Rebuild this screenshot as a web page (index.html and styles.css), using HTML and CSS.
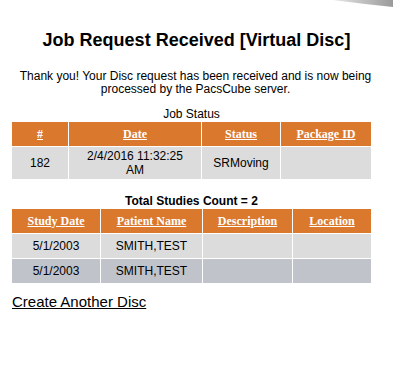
FILE: index.html
```html
<!DOCTYPE html>
<html lang="en">
  <head>
    <meta charset="UTF-8" />
    <meta name="viewport" content="width=device-width, initial-scale=1.0" />
    <title>Job Request Received</title>
    <link rel="stylesheet" href="styles.css">
  </head>
  <body>
    <!-- corner of the page curl -->
    <svg class="curl" width="60" height="8" viewBox="0 0 60 8">
      <defs>
        <linearGradient id="curlGrad" x1="0" y1="0" x2="1" y2="0">
          <stop offset="0" stop-color="#e6e6e6" />
          <stop offset="1" stop-color="#9a9a9a" />
        </linearGradient>
      </defs>
      <path d="M0 0 L60 0 L60 7 Q30 4 0 0 Z" fill="url(#curlGrad)" />
    </svg>

    <h1 class="title">Job Request Received [Virtual Disc]</h1>

    <p class="message">Thank you! Your Disc request has been received and is now being processed by the PacsCube server.</p>

    <table class="grid job">
      <caption>Job Status</caption>
      <thead>
        <tr>
          <th class="c-no"><a href="#">#</a></th>
          <th class="c-date"><a href="#">Date</a></th>
          <th class="c-status"><a href="#">Status</a></th>
          <th class="c-pkg"><a href="#">Package ID</a></th>
        </tr>
      </thead>
      <tbody>
        <tr class="tall">
          <td>182</td>
          <td>2/4/2016 11:32:25 AM</td>
          <td>SRMoving</td>
          <td></td>
        </tr>
      </tbody>
    </table>

    <table class="grid studies">
      <caption class="count">Total Studies Count = 2</caption>
      <thead>
        <tr>
          <th class="c-sdate"><a href="#">Study Date</a></th>
          <th class="c-name"><a href="#">Patient Name</a></th>
          <th class="c-desc"><a href="#">Description</a></th>
          <th class="c-loc"><a href="#">Location</a></th>
        </tr>
      </thead>
      <tbody>
        <tr>
          <td>5/1/2003</td>
          <td>SMITH,TEST</td>
          <td></td>
          <td></td>
        </tr>
        <tr class="alt">
          <td>5/1/2003</td>
          <td>SMITH,TEST</td>
          <td></td>
          <td></td>
        </tr>
      </tbody>
    </table>

    <a class="again" href="#">Create Another Disc</a>
  </body>
</html>
```

FILE: styles.css
```css
body {
    margin: 0;
    font-family: "Liberation Sans", Arial, sans-serif;
    font-size: 12px;
    color: #000;
    background: #fff;
}

.curl {
    position: absolute;
    top: 0;
    right: 0;
}

.title {
    margin: 29px 0 0;
    font-size: 18px;
    line-height: 22px;
    text-align: center;
}

.message {
    margin: 19px 0 0;
    padding: 0 14px 0 12px;
    line-height: 13px;
    text-align: center;
}

.grid {
    width: 361px;
    margin-left: 11px;
    border-collapse: separate;
    border-spacing: 1px;
    table-layout: fixed;
}

.grid caption {
    line-height: 14px;
    padding-bottom: 0;
}

.grid caption.count {
    font-weight: bold;
}

.job {
    margin-top: 11px;
}

.studies {
    margin-top: 14px;
}

.grid th,
.grid td {
    box-sizing: border-box;
}

.grid th {
    height: 24px;
    padding: 0 2px;
    background-color: #da792e;
    font-family: "Liberation Serif", "Times New Roman", serif;
    font-size: 12px;
    font-weight: bold;
    text-align: center;
}

.grid th a {
    color: #fff;
}

.grid td {
    height: 24px;
    padding: 0 10px;
    background-color: #dcdcdc;
    text-align: center;
    line-height: 14px;
}

.grid tr.tall td {
    height: 32px;
}

.grid tr.alt td {
    background-color: #c0c3ca;
}

.c-no { width: 56px; }
.c-date { width: 132px; }
.c-status { width: 78px; }
.c-pkg { width: 90px; }

.c-sdate { width: 88px; }
.c-name { width: 101px; }
.c-desc { width: 89px; }
.c-loc { width: 78px; }

.again {
    display: inline-block;
    margin: 9px 0 0 12px;
    font-size: 15px;
    color: #000;
}
```
